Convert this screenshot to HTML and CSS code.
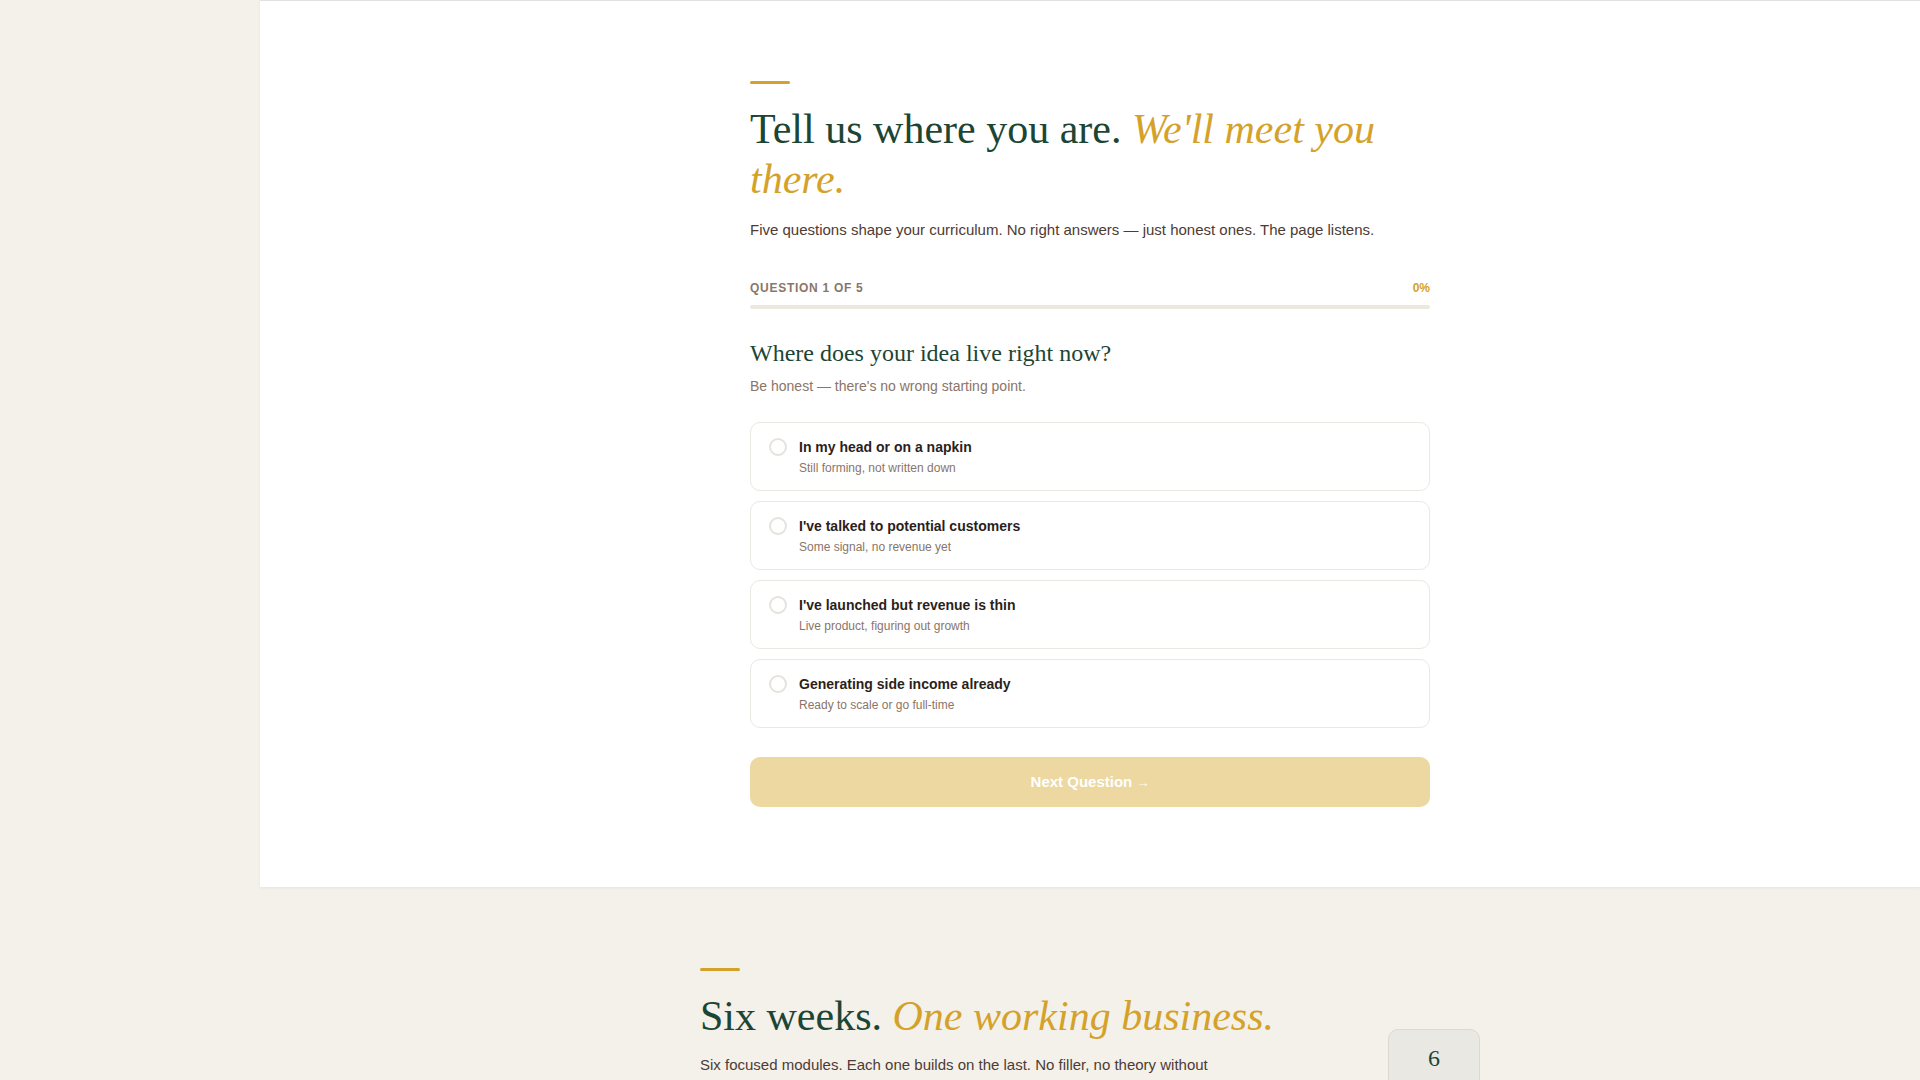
FILE: index.html
```html
<!DOCTYPE html>
<html lang="en">

<head>
    <meta charset="UTF-8">
    <meta name="viewport" content="width=device-width, initial-scale=1.0">
    <title>Founder Path - Intake</title>
    <link rel="stylesheet" href="styles.css">
</head>

<body>
    <div class="layout">
        <aside class="sidebar"></aside>

        <main class="main">
            <section class="intake">
                <div class="intake-inner">
                    <span class="accent"></span>
                    <h1>Tell us where you are. <em>We'll meet you there.</em></h1>
                    <p class="lead">Five questions shape your curriculum. No right answers — just honest ones. The page listens.</p>

                    <div class="progress-head">
                        <span class="progress-label">Question 1 of 5</span>
                        <span class="progress-value">0%</span>
                    </div>
                    <div class="progress-track">
                        <div class="progress-fill" style="width: 0%"></div>
                    </div>

                    <h2 class="question">Where does your idea live right now?</h2>
                    <p class="hint">Be honest — there's no wrong starting point.</p>

                    <div class="options">
                        <label class="option">
                            <input type="radio" name="stage">
                            <span class="radio"></span>
                            <span class="option-text">
                                <span class="option-title">In my head or on a napkin</span>
                                <span class="option-sub">Still forming, not written down</span>
                            </span>
                        </label>
                        <label class="option">
                            <input type="radio" name="stage">
                            <span class="radio"></span>
                            <span class="option-text">
                                <span class="option-title">I've talked to potential customers</span>
                                <span class="option-sub">Some signal, no revenue yet</span>
                            </span>
                        </label>
                        <label class="option">
                            <input type="radio" name="stage">
                            <span class="radio"></span>
                            <span class="option-text">
                                <span class="option-title">I've launched but revenue is thin</span>
                                <span class="option-sub">Live product, figuring out growth</span>
                            </span>
                        </label>
                        <label class="option">
                            <input type="radio" name="stage">
                            <span class="radio"></span>
                            <span class="option-text">
                                <span class="option-title">Generating side income already</span>
                                <span class="option-sub">Ready to scale or go full-time</span>
                            </span>
                        </label>
                    </div>

                    <button class="next-btn" disabled>Next Question <span class="arrow">→</span></button>
                </div>
            </section>

            <section class="curriculum">
                <div class="curriculum-inner">
                    <div class="curriculum-copy">
                        <span class="accent"></span>
                        <h2>Six weeks. <em>One working business.</em></h2>
                        <p>Six focused modules. Each one builds on the last. No filler, no theory without a task that puts it to work.</p>
                    </div>
                    <div class="stat">
                        <span class="stat-num">6</span>
                        <span class="stat-label">Modules</span>
                    </div>
                </div>
            </section>
        </main>
    </div>
</body>

</html>
```

FILE: styles.css
```css
body {
    margin: 0;
    font-family: 'Liberation Sans', Arial, sans-serif;
    background: #f4f1eb;
    color: #4a3a33;
}

.layout {
    display: flex;
    min-height: 100vh;
}

.sidebar {
    width: 260px;
    flex-shrink: 0;
    background: #f4f1eb;
}

.main {
    flex: 1;
    min-width: 0;
}

/* intake quiz */

.intake {
    background: #ffffff;
    border-top: 1px solid #e3e1de;
    box-shadow: 0 1px 3px rgba(0, 0, 0, 0.06);
    padding: 80px 20px 80px;
}

.intake-inner {
    max-width: 680px;
    margin: 0 auto;
}

.accent {
    display: block;
    width: 40px;
    height: 3px;
    background: #d4a22a;
    border-radius: 2px;
}

h1,
.curriculum h2 {
    font-family: 'Liberation Serif', 'Times New Roman', serif;
    font-weight: 400;
    font-size: 42px;
    line-height: 1.2;
    color: #1d4534;
    margin: 20px 0 14px;
}

h1 em,
.curriculum h2 em {
    color: #d4a22a;
}

.lead {
    font-size: 15px;
    line-height: 24px;
    margin: -1px 0 38px;
    color: #4d3b34;
}

.progress-head {
    display: flex;
    justify-content: space-between;
    align-items: center;
    font-size: 12px;
    font-weight: 700;
    letter-spacing: 0.06em;
    line-height: 16px;
}

.progress-label {
    text-transform: uppercase;
    color: #8a7568;
}

.progress-value {
    color: #d4a22a;
    letter-spacing: 0;
}

.progress-track {
    height: 4px;
    background: #ebe9df;
    border-radius: 2px;
    margin-top: 9px;
    overflow: hidden;
}

.progress-fill {
    height: 100%;
    background: #d4a22a;
}

.question {
    font-family: 'Liberation Serif', 'Times New Roman', serif;
    font-weight: 400;
    font-size: 24px;
    line-height: 30px;
    color: #1d4534;
    margin: 29px 0 8px;
}

.hint {
    font-size: 14px;
    line-height: 20px;
    color: #8a7568;
    margin: 0 0 26px;
}

.options {
    display: flex;
    flex-direction: column;
    gap: 10px;
}

.option {
    display: flex;
    align-items: flex-start;
    gap: 12px;
    padding: 14px 18px;
    border: 1px solid #ebe8e3;
    border-radius: 10px;
    background: #ffffff;
    cursor: pointer;
}

.option input {
    display: none;
}

.radio {
    width: 14px;
    height: 14px;
    border: 2px solid #e6e2dc;
    border-radius: 50%;
    margin-top: 1px;
    flex-shrink: 0;
}

.option input:checked + .radio {
    border-color: #d4a22a;
    box-shadow: inset 0 0 0 3px #fff;
    background: #d4a22a;
}

.option-text {
    display: flex;
    flex-direction: column;
}

.option-title {
    font-size: 14px;
    line-height: 20px;
    font-weight: 700;
    color: #2b1f1b;
}

.option-sub {
    font-size: 12px;
    line-height: 16px;
    margin-top: 3px;
    color: #8a7568;
}

.next-btn {
    display: block;
    width: 100%;
    height: 50px;
    margin-top: 29px;
    border: none;
    border-radius: 10px;
    background: #ecd8a0;
    color: #ffffff;
    font-family: inherit;
    font-size: 15px;
    font-weight: 700;
    cursor: pointer;
}

.next-btn .arrow {
    font-size: 13px;
    font-weight: 400;
}

.next-btn:disabled {
    cursor: not-allowed;
}

/* curriculum teaser */

.curriculum {
    padding: 81px 20px 80px;
}

.curriculum-inner {
    max-width: 780px;
    margin: 0 auto;
    display: flex;
    justify-content: space-between;
    align-items: flex-end;
    gap: 40px;
}

.curriculum-copy {
    flex: 1;
}

.curriculum h2 {
    margin-bottom: 11px;
}

.curriculum-copy p {
    max-width: 520px;
    font-size: 15px;
    line-height: 25px;
    margin: 0;
    color: #4d3b34;
}

.stat {
    display: flex;
    flex-direction: column;
    align-items: center;
    width: 90px;
    padding: 13px 0 11px;
    background: #eae8e2;
    border: 1px solid #dcd9d1;
    border-radius: 10px;
}

.stat-num {
    font-family: 'Liberation Serif', 'Times New Roman', serif;
    font-size: 24px;
    line-height: 30px;
    color: #1d4534;
}

.stat-label {
    font-size: 10px;
    font-weight: 700;
    letter-spacing: 0.1em;
    text-transform: uppercase;
    color: #8a7568;
    margin-top: 6px;
}
```
